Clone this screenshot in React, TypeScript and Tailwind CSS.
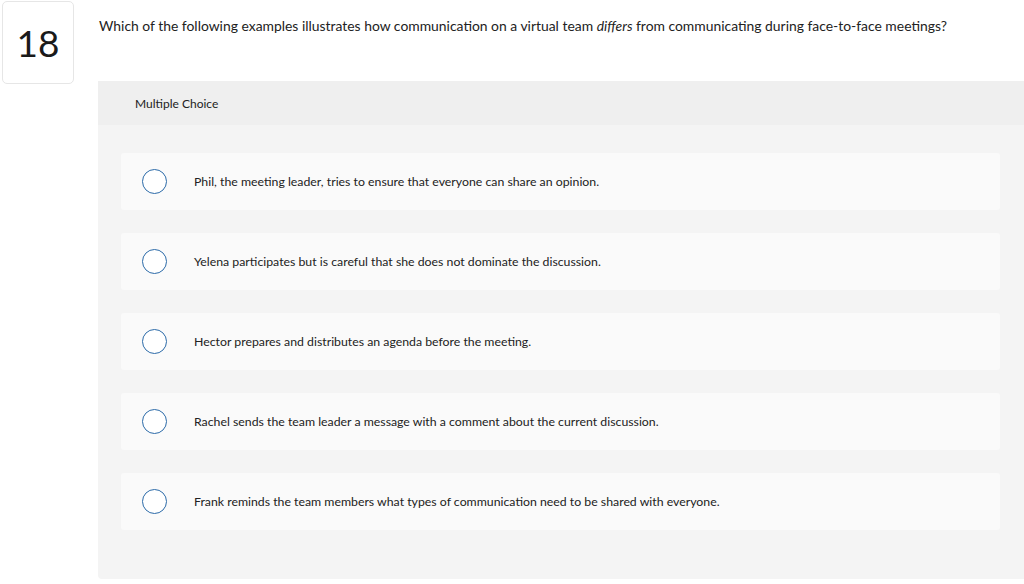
const OPTIONS = [
  'Phil, the meeting leader, tries to ensure that everyone can share an opinion.',
  'Yelena participates but is careful that she does not dominate the discussion.',
  'Hector prepares and distributes an agenda before the meeting.',
  'Rachel sends the team leader a message with a comment about the current discussion.',
  'Frank reminds the team members what types of communication need to be shared with everyone.',
]

export default function App() {
  return (
    <div className="w-[1024px] h-[584px] bg-white flex font-['Lato',sans-serif] text-[#222] overflow-hidden">
      <div className="w-[98px] shrink-0 pl-[2px] pt-[1px]">
        <div className="w-[72px] h-[83px] border border-[#e6e6e6] rounded-[5px] flex items-center justify-center text-[37px] text-[#1a1a1a] leading-none">
          18
        </div>
      </div>
      <div className="flex-1 flex flex-col">
        <p className="pl-[1px] pt-[17px] h-[81px] text-[13.9px] leading-[18px]">
          Which of the following examples illustrates how communication on a virtual team <i>differs</i> from
          communicating during face-to-face meetings?
        </p>
        <div className="flex-1 mb-[5px] bg-[#f4f4f4] rounded-bl-[4px] flex flex-col">
          <div className="h-[44px] bg-[#efefef] flex items-center pl-[37px] pt-[1px] text-[12px]">Multiple Choice</div>
          <div className="flex flex-col gap-[23px] pt-[28px] pl-[23px] pr-[24px]">
            {OPTIONS.map(o => (
              <div key={o} className="h-[57px] bg-[#fafafa] rounded-[3px] flex items-center">
                <span className="ml-[21px] w-[25px] h-[25px] rounded-full border-[1.5px] border-[#2b6aa8] bg-white shrink-0" />
                <span className="ml-[27px] pt-[2px] text-[12.3px]">{o}</span>
              </div>
            ))}
          </div>
        </div>
      </div>
    </div>
  )
}
